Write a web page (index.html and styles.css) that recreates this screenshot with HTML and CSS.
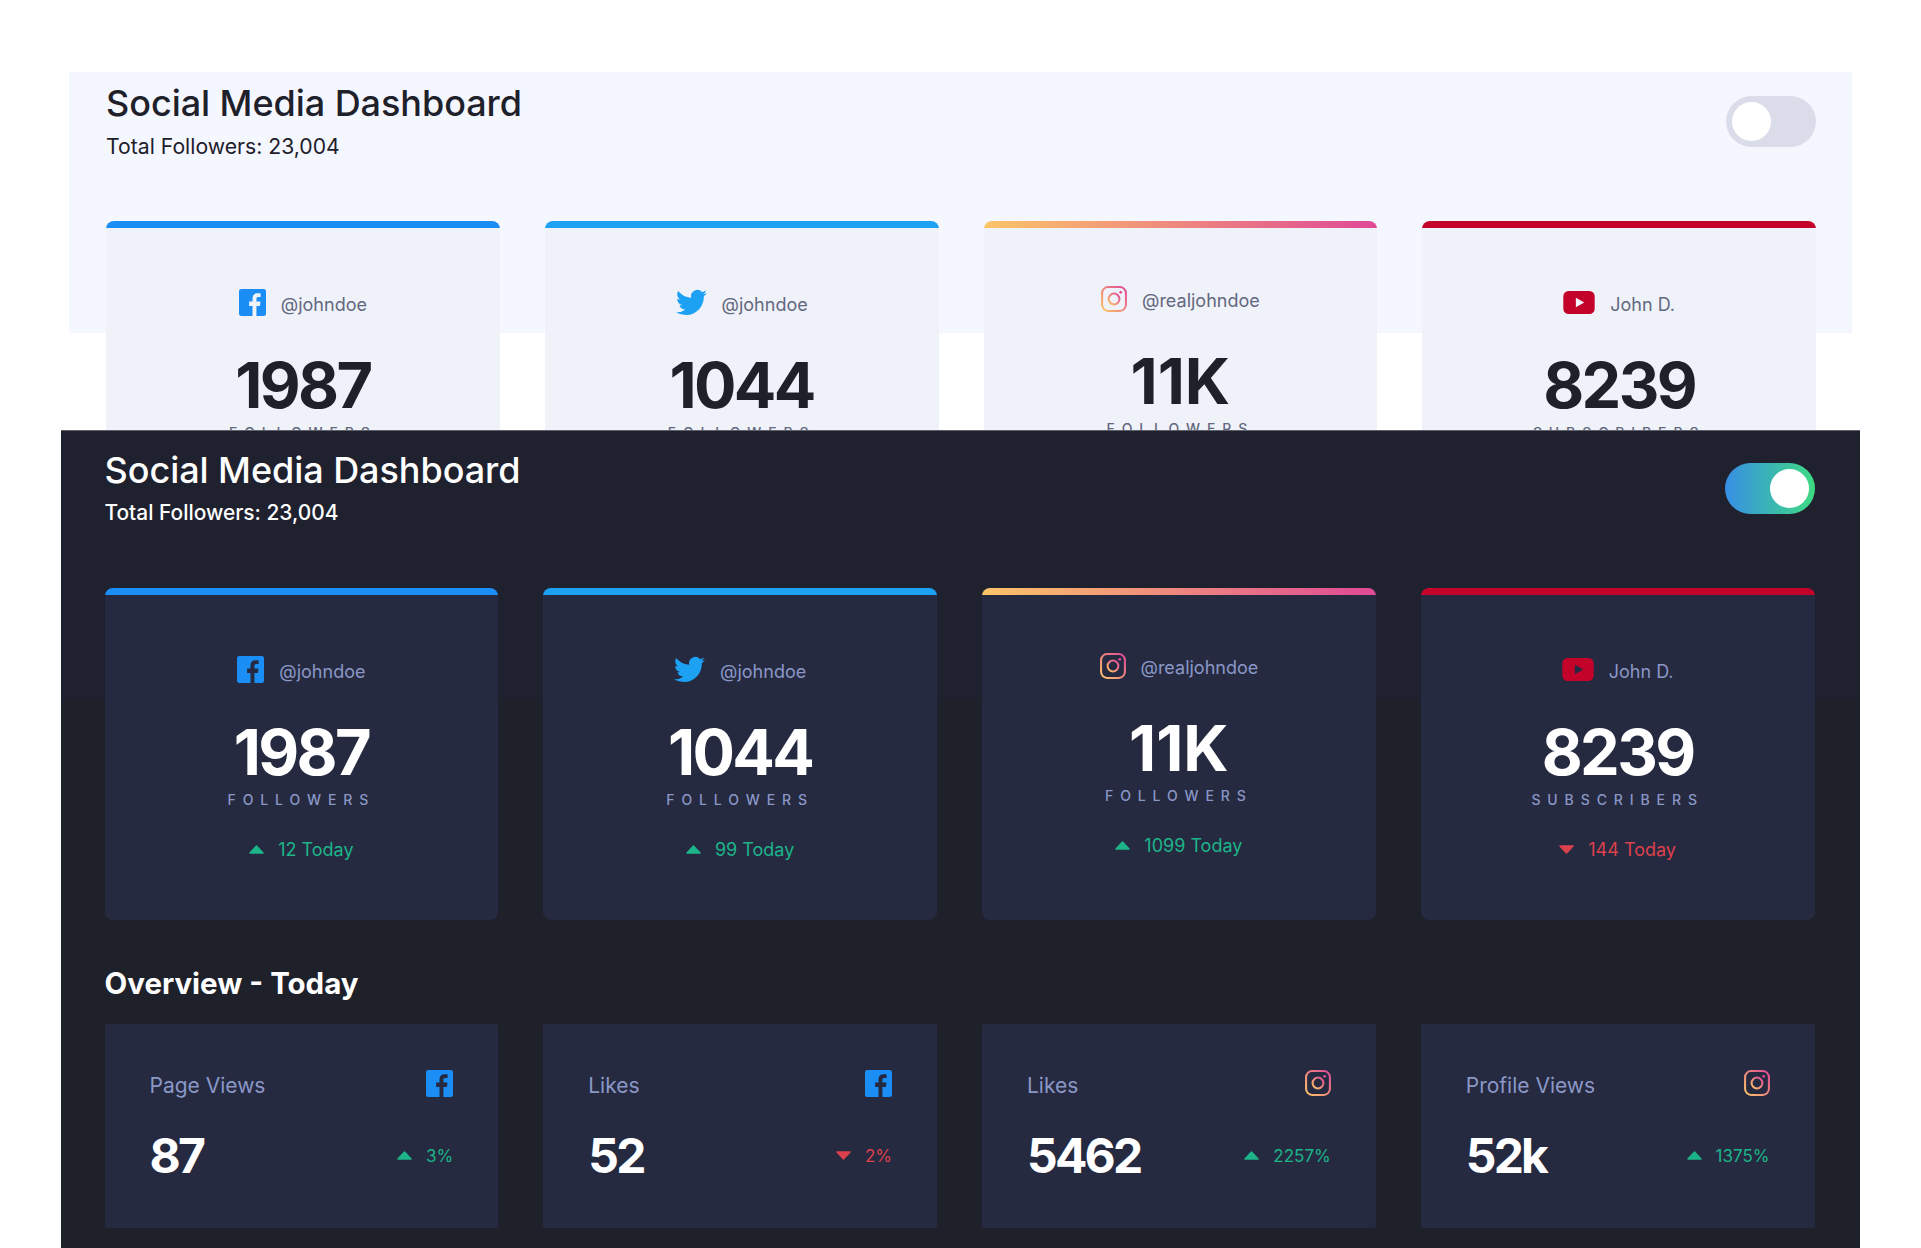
FILE: index.html
```html
<!DOCTYPE html>
<html lang="en">
<head>
  <meta charset="UTF-8">
  <title>Social Media Dashboard</title>
  <meta name="viewport" content="width=device-width, initial-scale=1.0">
  <link rel="stylesheet" href="styles.css">
</head>
<body>
  <!-- shared icons -->
  <svg class="icon-defs" aria-hidden="true">
    <defs>
      <linearGradient id="igGrad" x1="0" y1="1" x2="1" y2="0">
        <stop offset="0" stop-color="#fdc468"/>
        <stop offset="1" stop-color="#df4996"/>
      </linearGradient>
      <symbol id="i-facebook" viewBox="0 0 24 24">
        <path fill="#1b8ef5" d="M22 0H2a2 2 0 0 0-2 2v20a2 2 0 0 0 2 2h10v-9H9v-4h3V8.4c0-3 1.8-4.6 4.5-4.6 1.3 0 2.4.1 2.7.1v3.2h-1.9c-1.5 0-1.8.7-1.8 1.8V11h3.6l-.5 4h-3.1v9H22a2 2 0 0 0 2-2V2a2 2 0 0 0-2-2z"/>
      </symbol>
      <symbol id="i-twitter" viewBox="0 0 24 20">
        <path fill="#1da1f2" d="M23.953 2.57a10 10 0 0 1-2.825.775 4.958 4.958 0 0 0 2.163-2.723c-.951.555-2.005.959-3.127 1.184a4.92 4.92 0 0 0-8.384 4.482C7.69 6.095 4.067 4.13 1.64 1.162a4.822 4.822 0 0 0-.666 2.475c0 1.71.87 3.213 2.188 4.096a4.904 4.904 0 0 1-2.228-.616v.06a4.923 4.923 0 0 0 3.946 4.827 4.996 4.996 0 0 1-2.212.085 4.936 4.936 0 0 0 4.604 3.417 9.867 9.867 0 0 1-6.102 2.105c-.39 0-.779-.023-1.17-.067a13.995 13.995 0 0 0 7.557 2.209c9.053 0 13.998-7.496 13.998-13.985 0-.21 0-.42-.015-.63A9.935 9.935 0 0 0 24 2.59z"/>
      </symbol>
      <symbol id="i-instagram" viewBox="0 0 24 24">
        <rect x="1" y="1" width="22" height="22" rx="5.6" fill="none" stroke="url(#igGrad)" stroke-width="1.9"/>
        <circle cx="12" cy="12" r="5" fill="none" stroke="url(#igGrad)" stroke-width="1.9"/>
        <circle cx="18.2" cy="5.8" r="1.3" fill="#df4996"/>
      </symbol>
      <symbol id="i-youtube" viewBox="0 0 30 22">
        <path fill="#c4032b" fill-rule="evenodd" d="M5 0h20a5 5 0 0 1 5 5v12a5 5 0 0 1-5 5H5a5 5 0 0 1-5-5V5a5 5 0 0 1 5-5zm7 6.500v9l8-4.500z"/>
      </symbol>
      <symbol id="i-up" viewBox="0 0 15 9">
        <polygon points="7.500,1 14,8 1,8" fill="#1db489" stroke="#1db489" stroke-width="1.500" stroke-linejoin="round"/>
      </symbol>
      <symbol id="i-down" viewBox="0 0 15 9">
        <polygon points="1,1 14,1 7.500,8" fill="#dc414c" stroke="#dc414c" stroke-width="1.500" stroke-linejoin="round"/>
      </symbol>
    </defs>
  </svg>

  <!-- light theme, cut off by the dark one -->
  <div class="theme theme-light">
    <header class="top">
      <div>
        <h1>Social Media Dashboard</h1>
        <p class="total">Total Followers: 23,004</p>
      </div>
      <div class="toggle"><span class="knob"></span></div>
    </header>
    <div class="cards">
      <div class="card">
        <div class="bar bar-facebook"></div>
        <div class="handle"><svg class="ic-fb"><use href="#i-facebook"/></svg><span>@johndoe</span></div>
        <div class="count">1987</div>
        <div class="unit">FOLLOWERS</div>
      </div>
      <div class="card">
        <div class="bar bar-twitter"></div>
        <div class="handle"><svg class="ic-tw"><use href="#i-twitter"/></svg><span>@johndoe</span></div>
        <div class="count">1044</div>
        <div class="unit">FOLLOWERS</div>
      </div>
      <div class="card card-ig">
        <div class="bar bar-instagram"></div>
        <div class="handle"><svg class="ic-ig"><use href="#i-instagram"/></svg><span>@realjohndoe</span></div>
        <div class="count">11K</div>
        <div class="unit">FOLLOWERS</div>
      </div>
      <div class="card">
        <div class="bar bar-youtube"></div>
        <div class="handle"><svg class="ic-yt"><use href="#i-youtube"/></svg><span>John D.</span></div>
        <div class="count">8239</div>
        <div class="unit">SUBSCRIBERS</div>
      </div>
    </div>
  </div>

  <!-- dark theme -->
  <div class="theme theme-dark">
    <header class="top">
      <div>
        <h1>Social Media Dashboard</h1>
        <p class="total">Total Followers: 23,004</p>
      </div>
      <div class="toggle"><span class="knob"></span></div>
    </header>
    <div class="cards">
      <div class="card">
        <div class="bar bar-facebook"></div>
        <div class="handle"><svg class="ic-fb"><use href="#i-facebook"/></svg><span>@johndoe</span></div>
        <div class="count">1987</div>
        <div class="unit">FOLLOWERS</div>
        <div class="today up"><svg class="arrow"><use href="#i-up"/></svg><span>12 Today</span></div>
      </div>
      <div class="card">
        <div class="bar bar-twitter"></div>
        <div class="handle"><svg class="ic-tw"><use href="#i-twitter"/></svg><span>@johndoe</span></div>
        <div class="count">1044</div>
        <div class="unit">FOLLOWERS</div>
        <div class="today up"><svg class="arrow"><use href="#i-up"/></svg><span>99 Today</span></div>
      </div>
      <div class="card card-ig">
        <div class="bar bar-instagram"></div>
        <div class="handle"><svg class="ic-ig"><use href="#i-instagram"/></svg><span>@realjohndoe</span></div>
        <div class="count">11K</div>
        <div class="unit">FOLLOWERS</div>
        <div class="today up"><svg class="arrow"><use href="#i-up"/></svg><span>1099 Today</span></div>
      </div>
      <div class="card">
        <div class="bar bar-youtube"></div>
        <div class="handle"><svg class="ic-yt"><use href="#i-youtube"/></svg><span>John D.</span></div>
        <div class="count">8239</div>
        <div class="unit">SUBSCRIBERS</div>
        <div class="today down"><svg class="arrow"><use href="#i-down"/></svg><span>144 Today</span></div>
      </div>
    </div>

    <h2>Overview - Today</h2>
    <div class="cards">
      <div class="mini">
        <div class="mini-top"><span>Page Views</span><svg class="ic-fb"><use href="#i-facebook"/></svg></div>
        <div class="mini-bottom">
          <span class="mini-count">87</span>
          <span class="pct up"><svg class="arrow"><use href="#i-up"/></svg>3%</span>
        </div>
      </div>
      <div class="mini">
        <div class="mini-top"><span>Likes</span><svg class="ic-fb"><use href="#i-facebook"/></svg></div>
        <div class="mini-bottom">
          <span class="mini-count">52</span>
          <span class="pct down"><svg class="arrow"><use href="#i-down"/></svg>2%</span>
        </div>
      </div>
      <div class="mini">
        <div class="mini-top"><span>Likes</span><svg class="ic-ig"><use href="#i-instagram"/></svg></div>
        <div class="mini-bottom">
          <span class="mini-count">5462</span>
          <span class="pct up"><svg class="arrow"><use href="#i-up"/></svg>2257%</span>
        </div>
      </div>
      <div class="mini">
        <div class="mini-top"><span>Profile Views</span><svg class="ic-ig"><use href="#i-instagram"/></svg></div>
        <div class="mini-bottom">
          <span class="mini-count">52k</span>
          <span class="pct up"><svg class="arrow"><use href="#i-up"/></svg>1375%</span>
        </div>
      </div>
    </div>
  </div>
</body>
</html>
```
FILE: styles.css
```css
body {
  margin: 0;
  height: 1248px;
  overflow: hidden;
  background: #fff;
  font-family: Inter, 'Noto Sans', sans-serif;
}
.icon-defs {
  display: block;
  width: 0;
  height: 0;
}
.theme {
  overflow: hidden;
  box-sizing: border-box;
}
.theme-light {
  height: 358px;
  margin: 72px 69px 0;
  padding: 9px 36px 0 37px;
  color: #1e202a;
  --card: #f0f2fa;
  --muted: #63687e;
  background: linear-gradient(#f5f7ff 261px, transparent 261px);
}
.theme-dark {
  height: 818px;
  margin: 0 61px;
  padding: 17px 45.5px 0 43.5px;
  color: #fff;
  --card: #252a41;
  --muted: #8b97c6;
  border-top: 1px solid #5f616b;
  background: linear-gradient(#1f212e 270px, #1e202a 270px);
}
.top {
  display: flex;
  justify-content: space-between;
  align-items: flex-start;
}
h1 {
  margin: 0;
  font-size: 36px;
  line-height: 44px;
  font-weight: 500;
  letter-spacing: -0.05px;
}
.total {
  margin: 9px 0 0;
  font-size: 21.2px;
  line-height: 24px;
  font-weight: 400;
}
.theme-dark .total {
  font-size: 20.9px;
  font-weight: 500;
}
.toggle {
  box-sizing: border-box;
  display: flex;
  width: 90px;
  height: 51px;
  margin-top: 15px;
  padding: 6px;
  border-radius: 26px;
  background: #dadde9;
}
.knob {
  width: 39px;
  height: 39px;
  border-radius: 50%;
  background: #fff;
}
.theme-dark .toggle {
  justify-content: flex-end;
  background: linear-gradient(90deg, #378fe6, #3eda82);
}
.cards {
  display: grid;
  grid-template-columns: repeat(4, 1fr);
  gap: 45px;
  margin-top: 63px;
}
.card {
  padding-bottom: 59px;
  border-radius: 8px;
  overflow: hidden;
  background: var(--card);
  text-align: center;
}
.bar {
  height: 7px;
}
.bar-facebook { background: #1b8ef5; }
.bar-twitter { background: #1da1f2; }
.bar-instagram { background: linear-gradient(90deg, #fdc468, #df4996); }
.bar-youtube { background: #c4032b; }
.handle {
  display: flex;
  justify-content: center;
  align-items: flex-end;
  gap: 15px;
  height: 27px;
  margin-top: 61px;
  font-size: 18px;
  line-height: 22px;
  color: var(--muted);
}
.handle svg {
  align-self: center;
}
.card-ig .handle {
  margin-top: 57px;
  margin-bottom: 1px;
}
.ic-fb { width: 27px; height: 27px; }
.ic-tw { width: 31px; height: 27px; }
.ic-ig { width: 26px; height: 26px; }
.ic-yt { width: 32px; height: 23px; }
.count {
  margin-top: 38px;
  font-size: 63px;
  line-height: 63px;
  font-weight: 700;
  letter-spacing: -2.6px;
}
.card-ig .count {
  letter-spacing: 0;
}
.unit {
  margin-top: 7px;
  font-size: 14px;
  line-height: 18px;
  font-weight: 500;
  letter-spacing: 6.9px;
  color: var(--muted);
}
.today {
  display: flex;
  justify-content: center;
  align-items: center;
  gap: 14px;
  margin-top: 30px;
  font-size: 18px;
  line-height: 22px;
}
.up { color: #1db489; }
.down { color: #dc414c; }
.arrow {
  width: 15px;
  height: 9px;
  margin-bottom: 2px;
}
h2 {
  margin: 46px 0 0;
  font-size: 29.5px;
  line-height: 34px;
  font-weight: 700;
}
h2 + .cards {
  margin-top: 24px;
}
.mini {
  padding: 46px 45px 48px;
  border-radius: 2px;
  background: var(--card);
}
.mini-top {
  display: flex;
  justify-content: space-between;
  align-items: flex-end;
  height: 26px;
  font-size: 21px;
  line-height: 20px;
  color: var(--muted);
}
.mini-top svg {
  align-self: center;
}
.mini-bottom {
  display: flex;
  justify-content: space-between;
  align-items: center;
  margin-top: 36px;
}
.mini-count {
  font-size: 48px;
  line-height: 48px;
  font-weight: 700;
  letter-spacing: -2.8px;
}
.pct {
  display: flex;
  align-items: center;
  gap: 14px;
  font-size: 17px;
}
```
